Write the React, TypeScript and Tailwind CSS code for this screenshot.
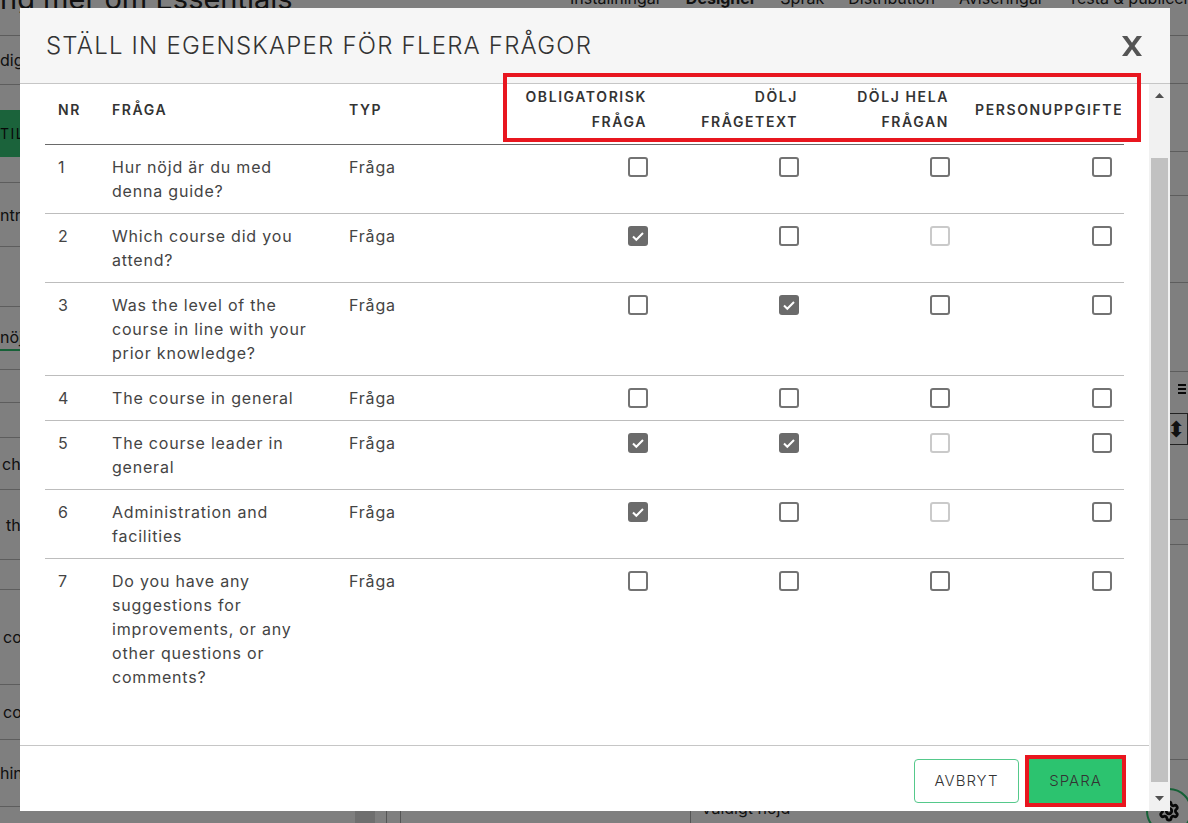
import { Settings } from 'lucide-react';

type BoxState = 'on' | 'off' | 'disabled';

interface QuestionRow {
    nr: number;
    lines: string[];
    type: string;
    boxes: BoxState[];
}

const questions: QuestionRow[] = [
    { nr: 1, lines: ['Hur nöjd är du med', 'denna guide?'], type: 'Fråga', boxes: ['off', 'off', 'off', 'off'] },
    { nr: 2, lines: ['Which course did you', 'attend?'], type: 'Fråga', boxes: ['on', 'off', 'disabled', 'off'] },
    {
        nr: 3,
        lines: ['Was the level of the', 'course in line with your', 'prior knowledge?'],
        type: 'Fråga',
        boxes: ['off', 'on', 'off', 'off'],
    },
    { nr: 4, lines: ['The course in general'], type: 'Fråga', boxes: ['off', 'off', 'off', 'off'] },
    { nr: 5, lines: ['The course leader in', 'general'], type: 'Fråga', boxes: ['on', 'on', 'disabled', 'off'] },
    { nr: 6, lines: ['Administration and', 'facilities'], type: 'Fråga', boxes: ['on', 'off', 'disabled', 'off'] },
    {
        nr: 7,
        lines: ['Do you have any', 'suggestions for', 'improvements, or any', 'other questions or', 'comments?'],
        type: 'Fråga',
        boxes: ['off', 'off', 'off', 'off'],
    },
];

// left menu of the page behind the dialog (only its left edge shows)
const sidebarRows = [
    { h: 'h-[49px]', text: 'dig', pad: 'ml-0' },
    { h: 'h-[98px]', button: true },
    { h: 'h-[64px]', text: 'ntr', pad: 'ml-0' },
    { h: 'h-[60px]', text: '' },
    { h: 'h-[63px]', text: 'nöj', pad: 'ml-0', active: true },
    { h: 'h-[33px]', text: '' },
    { h: 'h-[35px]', text: '' },
    { h: 'h-[52px]', text: 'ch', pad: 'ml-[2px]' },
    { h: 'h-[70px]', text: 'th', pad: 'ml-[6px]' },
    { h: 'h-[30px]', text: '' },
    { h: 'h-[95px]', text: 'co', pad: 'ml-[3px]' },
    { h: 'h-[55px]', text: 'co', pad: 'ml-[3px]' },
    { h: 'h-[67px]', text: 'hin', pad: 'ml-0' },
];

const GRID = 'grid grid-cols-[54px_237px_164px_160px_151px_151px_162px]';

function Checkbox({ state }: { state: BoxState }) {
    if (state === 'on') {
        return (
            <span className="flex h-[20px] w-[20px] items-center justify-center rounded-[3px] bg-[#6b6b6b]">
                <svg viewBox="0 0 20 20" className="h-[20px] w-[20px]">
                    <path d="M5 10.5l3.3 3.3L15 7" fill="none" stroke="#fff" strokeWidth="2" />
                </svg>
            </span>
        );
    }
    return (
        <span
            className={`block h-[20px] w-[20px] rounded-[3px] border-2 ${
                state === 'disabled' ? 'border-[#cacaca]' : 'border-[#737373]'
            }`}
        />
    );
}

function BackgroundPage() {
    return (
        <div className="flex h-full flex-col bg-white text-[#222]">
            <div className="flex h-[36px] shrink-0 border-b border-[#b8b8b8]">
                <div className="-mt-[20px] w-[570px] shrink-0 whitespace-nowrap text-[29px] leading-[38px]">
                    ng mer om Essentials
                </div>
                <div className="-mt-[12px] flex gap-[24px] whitespace-nowrap text-[16px] leading-[20px]">
                    <span>Inställningar</span>
                    <span className="font-bold">Designer</span>
                    <span>Språk</span>
                    <span>Distribution</span>
                    <span>Aviseringar</span>
                    <span>Testa &amp; publicera</span>
                </div>
            </div>
            <div className="flex min-h-0 flex-1">
                <div className="flex w-[355px] shrink-0 flex-col">
                    {sidebarRows.map((r, i) => (
                        <div key={i} className={`${r.h} flex shrink-0 items-center border-b border-[#bbb] text-[16px]`}>
                            {r.button ? (
                                <div className="flex h-[47px] w-[140px] items-center bg-[#37c777] text-[14px] tracking-[1.5px] text-[#111]">
                                    <span className="whitespace-nowrap">TILL</span>
                                </div>
                            ) : (
                                <span className={`${r.pad ?? ''} ${r.active ? 'border-b-2 border-[#2dc36e]' : ''}`}>
                                    {r.text}
                                </span>
                            )}
                        </div>
                    ))}
                </div>
                <div className="w-[20px] shrink-0 bg-[#dedede]" />
                <div className="w-[11px] shrink-0" />
                <div className="w-[14px] shrink-0 border-l border-[#aaa]" />
                <div className="w-[290px] shrink-0 border-l border-[#aaa]" />
                <div className="flex flex-1 flex-col border-l border-[#aaa]">
                    <div className="h-[48px] shrink-0 border-b border-[#bbb]" />
                    <div className="h-[68px] shrink-0 border-b border-[#bbb]" />
                    <div className="h-[44px] shrink-0 border-b border-[#bbb]" />
                    <div className="h-[87px] shrink-0 border-b border-[#bbb]" />
                    <div className="h-[89px] shrink-0 border-b border-[#bbb]" />
                    <div className="flex h-[148px] shrink-0 flex-col items-end border-b border-[#bbb] pt-[12px]">
                        <div className="mr-[2px] flex w-[8px] flex-col gap-[2px]">
                            <span className="h-[2px] bg-[#111]" />
                            <span className="h-[2px] bg-[#111]" />
                            <span className="h-[2px] bg-[#111]" />
                        </div>
                        <div className="mt-[19px] flex h-[32px] w-[60px] items-center justify-end border border-[#444] pr-[2px] text-[22px] leading-none">
                            ⬍
                        </div>
                    </div>
                    <div className="h-[25px] shrink-0 border-b border-[#bbb]" />
                    <div className="h-[215px] shrink-0 border-b border-[#bbb]" />
                    <div className="flex flex-1 items-start justify-between pl-[10px] pr-[60px] pt-[36px] text-[16px]">
                        <span>Väldigt nöjd</span>
                        <span className="mt-[-4px] h-[12px] w-[10px] border-2 border-[#111]" />
                    </div>
                </div>
            </div>
        </div>
    );
}

export default function App() {
    return (
        <div className="relative h-[823px] w-[1188px] overflow-hidden bg-white font-['Inter',sans-serif]">
            <BackgroundPage />

            <div className="absolute left-[1146px] top-[788px] flex h-[46px] w-[46px] items-center justify-center rounded-full border-2 border-[#2dc36e] bg-white">
                <Settings className="h-[22px] w-[22px] text-[#111]" strokeWidth={3} />
            </div>

            <div className="absolute inset-0 bg-black/50" />

            <div className="absolute left-[20px] top-[8px] flex h-[803px] w-[1150px] flex-col bg-white">
                <div className="flex h-[76px] shrink-0 items-center justify-between border-b border-[#c6c6c6] bg-[#f6f6f6] pl-[26px] pr-[28px]">
                    <h2 className="whitespace-nowrap text-[24px] font-light tracking-[1.2px] text-[#333]">
                        STÄLL IN EGENSKAPER FÖR FLERA FRÅGOR
                    </h2>
                    <svg viewBox="0 0 20 20" className="h-[20px] w-[20px]">
                        <polygon
                            points="0,0 5.2,0 10,6.8 14.8,0 20,0 12.6,10 20,20 14.8,20 10,13.2 5.2,20 0,20 7.4,10"
                            fill="#555"
                        />
                    </svg>
                </div>

                <div className="flex min-h-0 flex-1">
                    <div className="flex w-[1129px] flex-col">
                        <div className="h-[661px] shrink-0 px-[25px]">
                            <div
                                className={`${GRID} h-[61px] items-center border-b border-[#6a6a6a] pb-[10px] text-[14px] font-semibold leading-[25px] tracking-[1.6px] text-[#333]`}
                            >
                                <div className="pl-[13px]">NR</div>
                                <div className="pl-[13px]">FRÅGA</div>
                                <div className="pl-[13px]">TYP</div>
                                <div className="pr-[13px] text-right">
                                    OBLIGATORISK
                                    <br />
                                    FRÅGA
                                </div>
                                <div className="pr-[13px] text-right">
                                    DÖLJ
                                    <br />
                                    FRÅGETEXT
                                </div>
                                <div className="pr-[13px] text-right">
                                    DÖLJ HELA
                                    <br />
                                    FRÅGAN
                                </div>
                                <div className="pl-[13px] pr-[3px]">
                                    <div className="overflow-hidden whitespace-nowrap">PERSONUPPGIFTER</div>
                                </div>
                            </div>

                            {questions.map((q, idx) => (
                                <div
                                    key={q.nr}
                                    className={`${GRID} py-[10px] text-[16px] leading-[24px] tracking-[0.8px] text-[#444] ${
                                        idx < questions.length - 1 ? 'border-b border-[#bdbdbd]' : ''
                                    }`}
                                >
                                    <div className="pl-[13px]">{q.nr}</div>
                                    <div className="whitespace-nowrap pl-[13px]">
                                        {q.lines.map((line) => (
                                            <div key={line}>{line}</div>
                                        ))}
                                    </div>
                                    <div className="pl-[13px]">{q.type}</div>
                                    {q.boxes.map((b, i) => (
                                        <div key={i} className="flex justify-end pr-[12px] pt-[2px]">
                                            <Checkbox state={b} />
                                        </div>
                                    ))}
                                </div>
                            ))}
                        </div>

                        <div className="flex flex-1 items-start justify-end gap-[10px] border-t border-[#c6c6c6] pr-[27px] pt-[13px]">
                            <button className="h-[44px] w-[105px] rounded-[4px] border border-[#55c98b] bg-white text-[15px] font-light tracking-[1px] text-[#333]">
                                AVBRYT
                            </button>
                            <button className="h-[44px] w-[93px] bg-[#2cc36f] text-[15px] font-light tracking-[1px] text-[#333] outline-4 outline-[#e8161f]">
                                SPARA
                            </button>
                        </div>
                    </div>

                    <div className="flex w-[21px] shrink-0 flex-col bg-[#f1f1f1]">
                        <div className="flex h-[22px] shrink-0 items-center justify-center">
                            <svg width="9" height="5" viewBox="0 0 9 5">
                                <path d="M0 5L4.5 0L9 5z" fill="#505050" />
                            </svg>
                        </div>
                        <div className="h-[52px] shrink-0" />
                        <div className="mx-[2px] h-[624px] shrink-0 bg-[#c1c1c1]" />
                        <div className="flex-1" />
                        <div className="flex h-[26px] shrink-0 items-center justify-center">
                            <svg width="9" height="5" viewBox="0 0 9 5">
                                <path d="M0 0L4.5 5L9 0z" fill="#505050" />
                            </svg>
                        </div>
                    </div>
                </div>

                {/* annotation frame round the checkbox column headers */}
                <div className="pointer-events-none absolute left-[483px] top-[65px] h-[69px] w-[638px] border-4 border-[#e8161f]" />
            </div>
        </div>
    );
}
